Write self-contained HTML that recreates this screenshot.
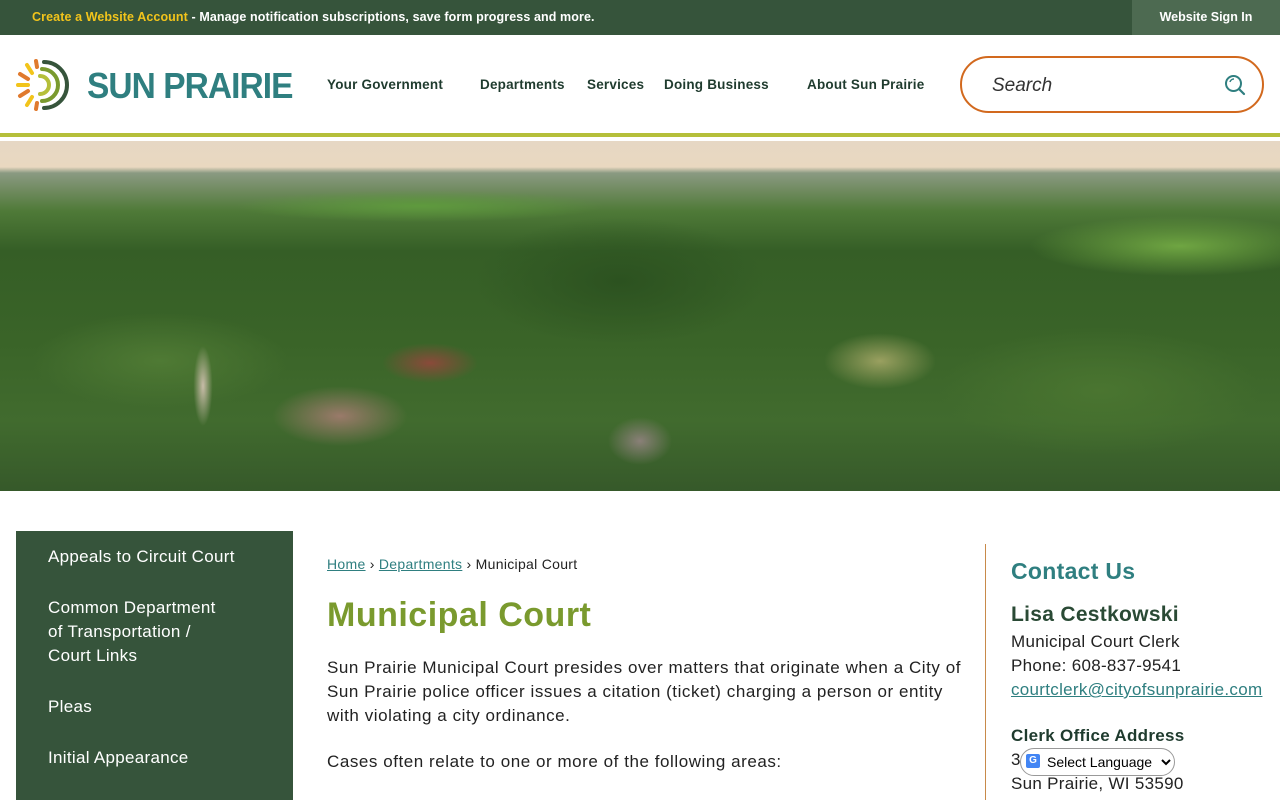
<!DOCTYPE html>
<html><head><meta charset="utf-8"><style>
*{box-sizing:border-box;margin:0;padding:0}
body{width:1280px;height:800px;overflow:hidden;font-family:"Liberation Sans",sans-serif;background:#fff;position:relative}
.top{height:35px;background:#36543b;color:#fff;font-size:12.5px;font-weight:bold;position:relative}
.top .msg{position:absolute;left:32px;top:10px;letter-spacing:0.1px}
.top .msg b{color:#f2c41b}
.top .sign{position:absolute;right:0;top:0;width:148px;height:35px;background:#4d6a51;text-align:center;line-height:35px;font-size:12.5px}
.hdr{height:102px;position:relative;border-bottom:4px solid #b5bf3a}
.logo{position:absolute;left:14px;top:21px}
.brand{position:absolute;left:87px;top:30px;font-size:36px;font-weight:bold;color:#2f7f80;letter-spacing:-1px;transform:scaleX(0.93);transform-origin:left}
.nav{position:absolute;top:42px;font-size:13.5px;font-weight:bold;color:#1f3b2e;letter-spacing:0.2px}
.search{position:absolute;left:960px;top:21px;width:304px;height:57px;border:2px solid #d2691e;border-radius:29px}
.search span{position:absolute;left:30px;top:17px;font-style:italic;font-size:19px;color:#333}
.hero{position:absolute;top:141px;left:0;width:1280px;height:350px;background:
radial-gradient(ellipse 60px 25px at 430px 222px,#8a4a3a 0,transparent 80%),
radial-gradient(ellipse 90px 40px at 340px 275px,#9a7a6a 0,transparent 75%),
radial-gradient(ellipse 70px 35px at 880px 220px,#9aa060 0,transparent 80%),
radial-gradient(ellipse 40px 30px at 640px 300px,#8a8078 0,transparent 80%),
radial-gradient(ellipse 12px 50px at 203px 245px,#c8bca8 0,transparent 80%),
radial-gradient(ellipse 200px 40px at 1180px 105px,#6fa542 0,transparent 75%),
radial-gradient(ellipse 230px 20px at 420px 65px,#5f9a3e 0,transparent 80%),
radial-gradient(ellipse 160px 60px at 160px 220px,#4f7a34 0,transparent 80%),
radial-gradient(ellipse 200px 80px at 1100px 250px,#4a7530 0,transparent 80%),
radial-gradient(ellipse 180px 80px at 620px 140px,#2c5220 0,transparent 80%),
linear-gradient(#e6d7c4 0,#e9d8c0 26px,#8a9a82 32px,#6f8a5e 50px,#4f7a38 70px,#355e26 110px,#3a6428 200px,#416b2e 280px,#36592a 350px)}
.side{position:absolute;left:16px;top:531px;width:277px;height:269px;background:#36543b;color:#fff;font-size:17px;line-height:24px;letter-spacing:0.3px}
.side div{position:absolute;left:32px}
.crumb{position:absolute;left:327px;top:556px;font-size:14px;color:#222;letter-spacing:0.3px}
.crumb a{color:#2f7f80;text-decoration:underline}
h1{position:absolute;left:327px;top:596px;font-size:34px;color:#7a9a2e;font-weight:bold;letter-spacing:0.5px}
.p{position:absolute;left:327px;font-size:17px;line-height:24px;color:#222;width:660px;letter-spacing:0.55px}
.vline{position:absolute;left:985px;top:544px;width:1px;height:256px;background:#c88a4a}
.ct{position:absolute;left:1011px;color:#222;font-size:17px;letter-spacing:0.3px}
select{position:absolute;left:1020px;top:748px;width:155px;height:28px;border:1px solid #999;border-radius:14px;font-size:14px;background:#fff;padding-left:22px}
</style></head><body>
<div class="top"><div class="msg"><b>Create a Website Account</b> - Manage notification subscriptions, save form progress and more.</div><div class="sign">Website Sign In</div></div>
<div class="hdr">
<svg class="logo" width="58" height="58" viewBox="0 0 58 58"><g fill="none" stroke-linecap="round" stroke-width="4">
<path d="M30 6 A23 23 0 0 1 30 52" stroke="#36543b"/><path d="M28 13 A16 16 0 0 1 28 45" stroke="#7a9a2e"/><path d="M26 20 A9 9 0 0 1 26 38" stroke="#b5bf3a"/>
<path d="M4 29 H14" stroke="#f2c41b"/><path d="M6 18 L14 23" stroke="#e07a2e"/><path d="M6 40 L14 35" stroke="#e07a2e"/><path d="M13 9 L18 17" stroke="#f2c41b"/><path d="M13 49 L18 41" stroke="#f2c41b"/><path d="M22 5 L23 11" stroke="#e07a2e"/><path d="M22 53 L23 47" stroke="#e07a2e"/></g></svg>
<div class="brand">SUN PRAIRIE</div>
<div class="nav" style="left:327px">Your Government</div>
<div class="nav" style="left:480px">Departments</div>
<div class="nav" style="left:587px">Services</div>
<div class="nav" style="left:664px">Doing Business</div>
<div class="nav" style="left:807px">About Sun Prairie</div>
<div class="search"><span>Search</span>
<svg style="position:absolute;right:16px;top:16px" width="22" height="22" viewBox="0 0 22 22"><circle cx="9.5" cy="9.5" r="7.5" fill="none" stroke="#2f7f80" stroke-width="2"/><path d="M15 15 L20 20" stroke="#2f7f80" stroke-width="2.2" stroke-linecap="round"/><path d="M6 8 A4 4 0 0 1 10 5" stroke="#2f7f80" stroke-width="1.5" fill="none"/></svg></div>
</div>
<div class="hero"></div>
<div class="side">
<div style="top:14px">Appeals to Circuit Court</div>
<div style="top:65px">Common Department<br>of Transportation /<br>Court Links</div>
<div style="top:164px">Pleas</div>
<div style="top:215px">Initial Appearance</div>
</div>
<div class="crumb"><a>Home</a> › <a>Departments</a> › Municipal Court</div>
<h1>Municipal Court</h1>
<div class="p" style="top:656px">Sun Prairie Municipal Court presides over matters that originate when a City of<br>Sun Prairie police officer issues a citation (ticket) charging a person or entity<br>with violating a city ordinance.</div>
<div class="p" style="top:750px">Cases often relate to one or more of the following areas:</div>
<div class="vline"></div>
<div class="ct" style="top:558px;font-size:23px;font-weight:bold;color:#2f7f80">Contact Us</div>
<div class="ct" style="top:603px;font-size:21px;font-weight:bold;color:#2a4a35">Lisa Cestkowski</div>
<div class="ct" style="top:632px">Municipal Court Clerk</div>
<div class="ct" style="top:656px">Phone: 608-837-9541</div>
<div class="ct" style="top:680px;color:#2f7f80;text-decoration:underline">courtclerk@cityofsunprairie.com</div>
<div class="ct" style="top:726px;font-weight:bold;color:#1f3b2e">Clerk Office Address</div>
<div class="ct" style="top:750px">3</div>
<div class="ct" style="top:774px">Sun Prairie, WI 53590</div>
<select><option>Select Language</option></select>
<div style="position:absolute;left:1026px;top:754px;width:14px;height:14px;background:#4285f4;border-radius:2px;color:#fff;font-size:10px;text-align:center;line-height:14px;font-weight:bold">G</div>
</body></html>
